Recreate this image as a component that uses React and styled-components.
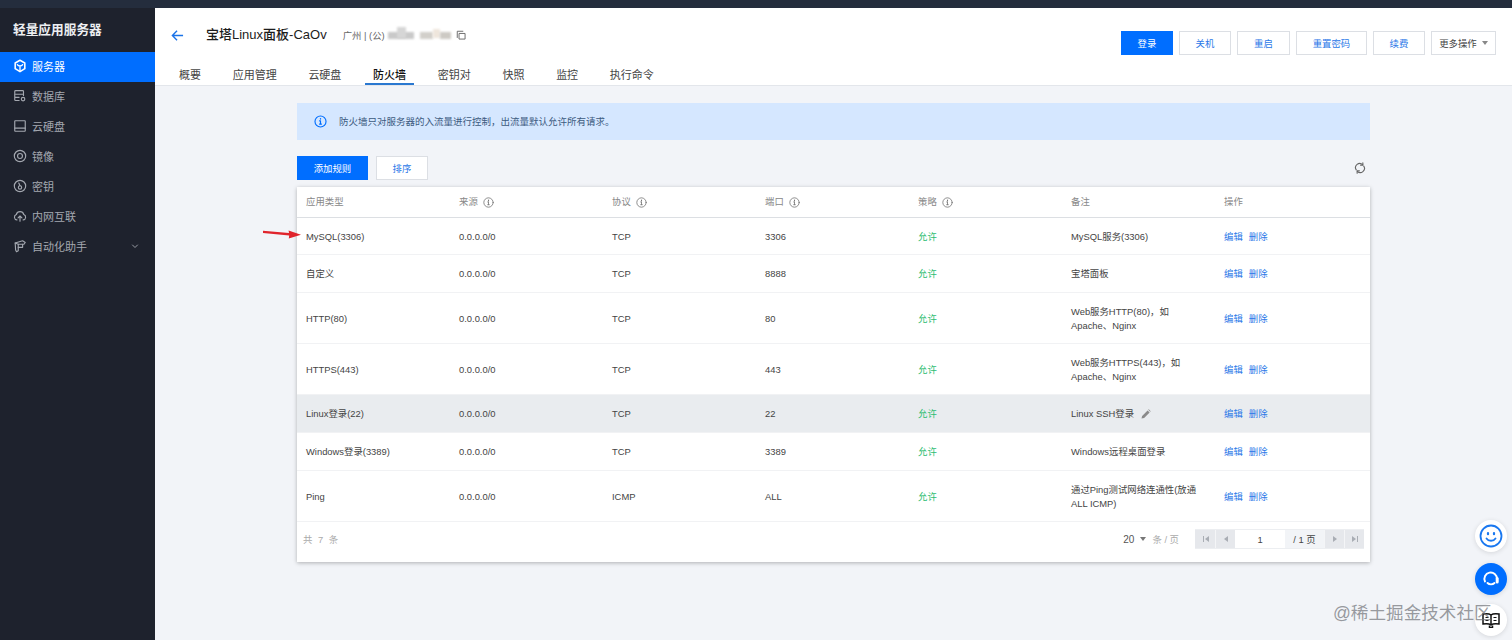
import React from 'react'
import styled, { createGlobalStyle } from 'styled-components'

const Global = createGlobalStyle`
  html, body { margin: 0; padding: 0; height: 640px; overflow: hidden; }
  body {
    font-family: "Liberation Sans", "Noto Sans CJK SC", sans-serif;
    font-size: 9.4px;
    color: #444;
    background: #f2f4f8;
  }
  * { box-sizing: border-box; }
`

const Page = styled.div`
  position: relative;
  width: 1512px;
  height: 640px;
  display: flex;
  flex-direction: column;
  overflow: hidden;
`

const TopStrip = styled.div`
  height: 8px;
  flex: none;
  background: #242d3d;
`

const Body = styled.div`
  flex: 1;
  display: flex;
  min-height: 0;
`

const Sidebar = styled.aside`
  width: 155px;
  flex: none;
  background: #1e222d;
`

const Brand = styled.div`
  height: 44px;
  padding: 0 13px 4px;
  display: flex;
  align-items: center;
  color: #eceef1;
  font-size: 12.7px;
  font-weight: 700;
`

const NavItem = styled.div`
  height: 30px;
  display: flex;
  align-items: center;
  padding: 0 13px 2px;
  gap: 5px;
  font-size: 11px;
  color: ${p => (p.$active ? '#fff' : '#a4a8b0')};
  background: ${p => (p.$active ? '#006eff' : 'transparent')};
  svg { flex: none; }
`

const NavCaret = styled.span`
  margin-left: auto;
  margin-right: 3px;
  display: flex;
`

const Main = styled.main`
  flex: 1;
  min-width: 0;
  display: flex;
  flex-direction: column;
`

const Header = styled.header`
  height: 78px;
  flex: none;
  background: #fff;
  border-bottom: 1px solid #e3e6eb;
  display: flex;
  flex-direction: column;
`

const HeaderTop = styled.div`
  height: 55px;
  padding: 15px 16px 0 16px;
  display: flex;
  align-items: flex-start;
`

const BackIcon = styled.span`
  display: flex;
  width: 35px;
  height: 24px;
  align-items: center;
`

const Title = styled.h1`
  margin: 0 16px 0 0;
  font-size: 13px;
  line-height: 24px;
  font-weight: 500;
  color: #1c1c1c;
`

const Meta = styled.div`
  display: flex;
  align-items: center;
  height: 24px;
  font-size: 9.4px;
  color: #666;
`

const BlurBlock = styled.i`
  display: inline-block;
  width: ${p => p.$w}px;
  height: ${p => p.$h || 7}px;
  margin-left: ${p => p.$gap || 0}px;
  margin-top: ${p => p.$top || 0}px;
  background: ${p => p.$color || '#c9c9c9'};
  filter: blur(1.2px);
`

const CopyIcon = styled.span`
  display: flex;
  margin-left: 5px;
`

const Actions = styled.div`
  margin-left: auto;
  margin-top: 8px;
  display: flex;
  gap: 6px;
`

const Button = styled.button`
  height: 24px;
  width: ${p => p.$w}px;
  padding: 0 0 1px;
  font: inherit;
  font-size: 9.4px;
  border: 1px solid ${p => (p.$primary ? '#006eff' : '#dcdfe4')};
  background: ${p => (p.$primary ? '#006eff' : '#fff')};
  color: ${p => (p.$primary ? '#fff' : p.$plain ? '#444' : '#2a78e8')};
  display: flex;
  align-items: center;
  justify-content: center;
  gap: 5px;
`

const Tabs = styled.nav`
  display: flex;
  padding-left: 16px;
  gap: 15.7px;
  height: 23px;
`

const Tab = styled.div`
  padding: 0 8px;
  font-size: 11px;
  line-height: 26px;
  height: 23px;
  color: ${p => (p.$active ? '#111' : '#444')};
  font-weight: ${p => (p.$active ? 500 : 400)};
  border-bottom: 2px solid ${p => (p.$active ? '#2a78d0' : 'transparent')};
`

const Content = styled.div`
  padding: 17px 142px 0;
`

const Notice = styled.div`
  height: 37px;
  background: #d5e7ff;
  padding: 0 0 1px 17px;
  display: flex;
  align-items: center;
  gap: 12px;
  font-size: 9.5px;
  color: #3c5a80;
`

const Toolbar = styled.div`
  margin-top: 16px;
  height: 24px;
  display: flex;
  gap: 8px;
  align-items: center;
`

const RefreshIcon = styled.span`
  margin-left: auto;
  margin-right: 4px;
  display: flex;
`

const Card = styled.section`
  margin-top: 7px;
  background: #fff;
  box-shadow: 0 1px 4px rgba(0, 0, 0, 0.28);
`

const Row = styled.div`
  display: grid;
  grid-template-columns: repeat(7, 153px) 1fr;
  height: ${p => p.$h}px;
  align-items: center;
  padding: ${p => (p.$head ? 0 : 1)}px 0 0 9px;
  background: ${p => (p.$hover ? '#e9ecef' : '#fff')};
  border-bottom: 1px solid ${p => (p.$head ? '#dcdfe3' : '#f1f2f4')};
  color: ${p => (p.$head ? '#888' : '#444')};
  line-height: 14px;
`

const Cell = styled.div`
  display: flex;
  align-items: center;
  gap: ${p => p.$gap ?? 5}px;
`

const Allow = styled.span`
  color: #2ebd72;
`

const LinkText = styled.a`
  color: #2a78e8;
  margin-right: 6px;
`

const CardFoot = styled.div`
  height: 40px;
  display: flex;
  align-items: flex-start;
  padding: 7px 6px 0;
  color: #aaa;
`

const FootCount = styled.span`
  line-height: 22px;
  letter-spacing: 1.2px;
  word-spacing: 0.6px;
`

const PerPage = styled.div`
  margin-left: auto;
  margin-right: 16px;
  display: flex;
  align-items: center;
  height: 20px;
  gap: 6px;
  color: #aaa;
  b { font-weight: 400; color: #555; font-size: 10px; }
`

const Pager = styled.div`
  display: flex;
  height: 20px;
  background: #f2f4f7;
  border-top: 1px solid #eceef1;
  border-bottom: 1px solid #eceef1;
`

const PageBtn = styled.span`
  width: 20px;
  background: #e6e8ec;
  border-left: 1px solid ${p => (p.$first ? 'transparent' : '#f4f5f7')};
  display: flex;
  align-items: center;
  justify-content: center;
`

const PageInput = styled.span`
  width: 50px;
  background: #fff;
  color: #444;
  display: flex;
  align-items: center;
  justify-content: center;
`

const PageTotal = styled.span`
  width: 39px;
  color: #444;
  font-size: 9.4px;
  display: flex;
  align-items: center;
  justify-content: center;
`

/* things that sit on top of the page */
const RedArrow = styled.svg`
  position: absolute;
  left: 262px;
  top: 228px;
`

const Fab = styled.div`
  position: absolute;
  left: 1475px;
  top: ${p => p.$top}px;
  width: 32px;
  height: 32px;
  border-radius: 50%;
  background: ${p => (p.$blue ? '#006eff' : '#fff')};
  box-shadow: 0 1px 5px rgba(0, 0, 0, 0.12);
  display: flex;
  align-items: center;
  justify-content: center;
`

const Watermark = styled.div`
  position: absolute;
  left: 1333px;
  top: 601px;
  font-size: 17.6px;
  line-height: 24px;
  color: rgba(110, 112, 118, 0.7);
  white-space: nowrap;
`

const Ico = ({ size = 14, color = 'currentColor', sw = 1.3, children }) => (
  <svg width={size} height={size} viewBox="0 0 16 16" fill="none" stroke={color} strokeWidth={sw} strokeLinecap="round" strokeLinejoin="round">
    {children}
  </svg>
)

const InfoIcon = ({ size = 11, color = '#777', sw = 1.2 }) => (
  <Ico size={size} color={color} sw={sw}>
    <circle cx="8" cy="8" r="6.8" />
    <path d="M8 7.2v4M6.8 7.2H8M6.8 11.2h2.4" />
    <path d="M8 4.4v.6" strokeWidth="1.6" />
  </Ico>
)

const navItems = [
  { label: '服务器', active: true, icon: (
    <Ico sw={1.8}>
      <path d="M8 1.5l5.5 3v6.5L8 14.5 2.5 11V4.5z" />
      <path d="M5 6.5c1 1.8 5 1.8 6 0M8 8v6" strokeWidth="1.5" />
    </Ico>
  ) },
  { label: '数据库', icon: (
    <Ico>
      <rect x="2" y="1.8" width="10" height="4.2" rx="1" />
      <path d="M2 6v6.2c0 .6.4 1 1 1h4M2 9.5h5M12 6v1.5" />
      <circle cx="11.5" cy="11.5" r="2" />
    </Ico>
  ) },
  { label: '云硬盘', icon: (
    <Ico>
      <rect x="2" y="2" width="12" height="12" rx="0.5" />
      <path d="M2 10.5h12" />
    </Ico>
  ) },
  { label: '镜像', icon: (
    <Ico>
      <circle cx="8" cy="8" r="6.5" />
      <circle cx="8" cy="8" r="2.8" />
    </Ico>
  ) },
  { label: '密钥', icon: (
    <Ico>
      <circle cx="8" cy="8" r="6.5" />
      <circle cx="8" cy="9.6" r="1.9" />
      <path d="M8 7.7L6.6 4.6" />
    </Ico>
  ) },
  { label: '内网互联', icon: (
    <Ico>
      <path d="M4.5 12.5A3.2 3.2 0 0 1 3.8 6.3a4.4 4.4 0 0 1 8.5 0 3.2 3.2 0 0 1-.7 6.2" />
      <path d="M8 14V8.5M5.8 10.2L8 8l2.2 2.2" />
    </Ico>
  ) },
  { label: '自动化助手', caret: true, icon: (
    <Ico>
      <path d="M2.5 4.5L11 2l3 2-1.5 2H6v7.5l-2 1-1-2z" />
      <path d="M6 6l-3.5-1.5M6 9.5h5V6" />
    </Ico>
  ) },
]

const tabs = ['概要', '应用管理', '云硬盘', '防火墙', '密钥对', '快照', '监控', '执行命令']

const rules = [
  { h: 37, type: 'MySQL(3306)', proto: 'TCP', port: '3306', note: ['MySQL服务(3306)'] },
  { h: 38, type: '自定义', proto: 'TCP', port: '8888', note: ['宝塔面板'] },
  { h: 51, type: 'HTTP(80)', proto: 'TCP', port: '80', note: ['Web服务HTTP(80)，如', 'Apache、Nginx'] },
  { h: 51, type: 'HTTPS(443)', proto: 'TCP', port: '443', note: ['Web服务HTTPS(443)，如', 'Apache、Nginx'] },
  { h: 38, type: 'Linux登录(22)', proto: 'TCP', port: '22', note: ['Linux SSH登录'], hover: true },
  { h: 38, type: 'Windows登录(3389)', proto: 'TCP', port: '3389', note: ['Windows远程桌面登录'] },
  { h: 51, type: 'Ping', proto: 'ICMP', port: 'ALL', note: ['通过Ping测试网络连通性(放通', 'ALL ICMP)'] },
]

const heads = [
  ['应用类型'], ['来源', true], ['协议', true], ['端口', true], ['策略', true], ['备注'], ['操作'],
]

const PageGlyph = ({ d }) => (
  <svg width="8" height="8" viewBox="0 0 8 8" fill="#a9adb4"><path d={d} /></svg>
)

export default function App() {
  return (
    <Page>
      <Global />
      <TopStrip />
      <Body>
        <Sidebar>
          <Brand>轻量应用服务器</Brand>
          {navItems.map(n => (
            <NavItem key={n.label} $active={n.active}>
              {n.icon}
              {n.label}
              {n.caret && (
                <NavCaret>
                  <Ico size={8} sw={1.8}><path d="M3 6l5 5 5-5" /></Ico>
                </NavCaret>
              )}
            </NavItem>
          ))}
        </Sidebar>
        <Main>
          <Header>
            <HeaderTop>
              <BackIcon>
                <svg width="13" height="13" viewBox="0 0 14 14" fill="none" stroke="#1a73e8" strokeWidth="1.5">
                  <path d="M13 7H1.5M6.5 2L1.5 7l5 5" />
                </svg>
              </BackIcon>
              <Title>宝塔Linux面板-CaOv</Title>
              <Meta>
                广州 | (公)
                <BlurBlock $w={26} $gap={3} />
                <BlurBlock $w={9} $h={11} $top={-5} $gap={-17} $color="#d6d6d6" />
                <BlurBlock $w={13} $gap={14} $color="#d2cfca" />
                <BlurBlock $w={7} $h={9} $top={-4} $color="#efe6dc" />
                <BlurBlock $w={11} $color="#cdcac4" />
                <CopyIcon>
                  <Ico size={10} color="#666" sw={1.5}>
                    <path d="M2 12V2h9" />
                    <rect x="5.5" y="5.5" width="9" height="9" />
                  </Ico>
                </CopyIcon>
              </Meta>
              <Actions>
                <Button $primary $w={52}>登录</Button>
                <Button $w={52}>关机</Button>
                <Button $w={53}>重启</Button>
                <Button $w={71}>重置密码</Button>
                <Button $w={52}>续费</Button>
                <Button $plain $w={65}>
                  更多操作
                  <svg width="6" height="4" viewBox="0 0 6 4" fill="#888"><path d="M0 0h6L3 4z" /></svg>
                </Button>
              </Actions>
            </HeaderTop>
            <Tabs>
              {tabs.map(t => (
                <Tab key={t} $active={t === '防火墙'}>{t}</Tab>
              ))}
            </Tabs>
          </Header>
          <Content>
            <Notice>
              <InfoIcon size={13} color="#006eff" sw={1.4} />
              防火墙只对服务器的入流量进行控制，出流量默认允许所有请求。
            </Notice>
            <Toolbar>
              <Button $primary $w={71}>添加规则</Button>
              <Button $w={52}>排序</Button>
              <RefreshIcon>
                <Ico size={12} color="#666" sw={1.5}>
                  <path d="M3 10.5A5.5 5.5 0 0 1 11.5 3.6" />
                  <path d="M13 5.5A5.5 5.5 0 0 1 4.5 12.4" />
                  <path d="M11.8 1v3.2H8.8" />
                  <path d="M4.2 15v-3.2h3" />
                </Ico>
              </RefreshIcon>
            </Toolbar>
            <Card>
              <Row $head $h={31}>
                {heads.map(([label, info]) => (
                  <Cell key={label}>
                    {label}
                    {info && <InfoIcon />}
                  </Cell>
                ))}
              </Row>
              {rules.map(r => (
                <Row key={r.type} $h={r.h} $hover={r.hover}>
                  <Cell>{r.type}</Cell>
                  <Cell>0.0.0.0/0</Cell>
                  <Cell>{r.proto}</Cell>
                  <Cell>{r.port}</Cell>
                  <Cell><Allow>允许</Allow></Cell>
                  <Cell $gap={7}>
                    <div>
                      {r.note.map(line => <div key={line}>{line}</div>)}
                    </div>
                    {r.hover && (
                      <svg width="10" height="10" viewBox="0 0 10 10" fill="#8a8a8a">
                        <path d="M0.5 9.5l.6-2.6L6.6 1.4l2 2L3.1 8.9zM7.2.8l.6-.5 1.9 1.9-.5.6z" />
                      </svg>
                    )}
                  </Cell>
                  <Cell $gap={0}>
                    <LinkText>编辑</LinkText>
                    <LinkText>删除</LinkText>
                  </Cell>
                </Row>
              ))}
              <CardFoot>
                <FootCount>共 7 条</FootCount>
                <PerPage>
                  <b>20</b>
                  <svg width="6" height="4" viewBox="0 0 6 4" fill="#777"><path d="M0 0h6L3 4z" /></svg>
                  <span>条 / 页</span>
                </PerPage>
                <Pager>
                  <PageBtn $first><PageGlyph d="M1 1h1v6H1zM7 1v6L3 4z" /></PageBtn>
                  <PageBtn><PageGlyph d="M6 1v6L2 4z" /></PageBtn>
                  <PageInput>1</PageInput>
                  <PageTotal>/ 1 页</PageTotal>
                  <PageBtn><PageGlyph d="M2 1v6l4-3z" /></PageBtn>
                  <PageBtn><PageGlyph d="M1 1v6l4-3zM6 1h1v6H6z" /></PageBtn>
                </Pager>
              </CardFoot>
            </Card>
          </Content>
        </Main>
      </Body>

      <RedArrow width="40" height="12" viewBox="0 0 40 12">
        <path d="M1 2.8L27 5 26.6 2.4 39 6.8 26.8 10.4 27.2 7.4 1 5z" fill="#e0242c" />
      </RedArrow>

      <Fab $top={520}>
        <svg width="24" height="24" viewBox="0 0 24 24" fill="none" stroke="#1a78f0" strokeWidth="1.8" strokeLinecap="round">
          <circle cx="12" cy="12" r="10.5" />
          <path d="M9 9v1.2M15 9v1.2" strokeWidth="2.2" />
          <path d="M7.5 14.5c2 3 7 3 9 0" />
        </svg>
      </Fab>
      <Fab $top={563} $blue>
        <svg width="22" height="22" viewBox="0 0 22 22" fill="none" stroke="#fff" strokeWidth="1.9" strokeLinecap="round">
          <path d="M5 13.5A6.3 6.3 0 1 1 17 11" />
          <path d="M17.2 10.5v3.5" strokeWidth="3" />
          <path d="M7.5 15c1.8 1.8 5.2 1.8 7 0" />
        </svg>
      </Fab>
      <Fab $top={604}>
        <svg width="18" height="16" viewBox="0 0 18 16" fill="none" stroke="#111" strokeWidth="1.5">
          <path d="M9 3C7.5 1.8 4 1.6 1 2v10c3-.4 6.5-.2 8 1 1.5-1.2 5-1.4 8-1V2c-3-.4-6.5-.2-8 1zM9 3v10" />
          <path d="M7.5 13.5v2h3v-2" />
          <path d="M3.5 5.5h3M11.5 5.5h3M3.5 8.5h3M11.500 8.500h3" strokeWidth="1.2" />
        </svg>
      </Fab>
      <Watermark>@稀土掘金技术社区</Watermark>
    </Page>
  )
}
